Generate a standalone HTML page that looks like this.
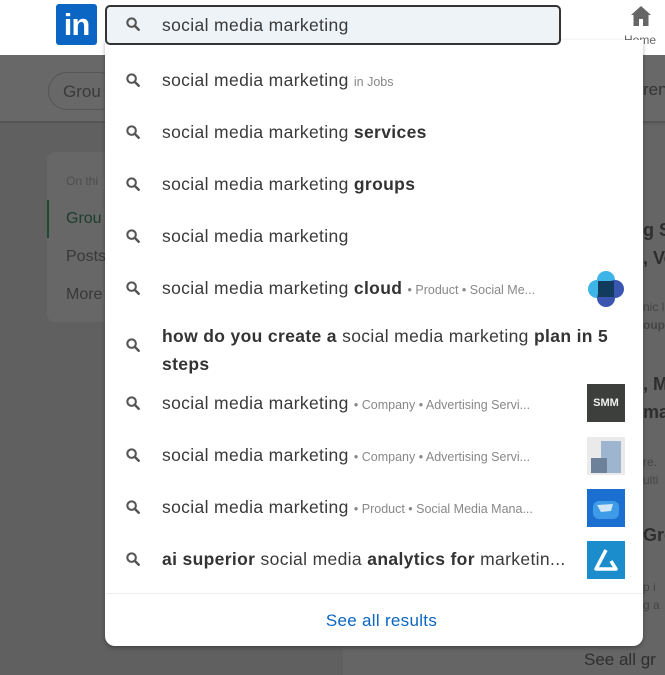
<!DOCTYPE html>
<html><head><style>
*{margin:0;padding:0;box-sizing:border-box}
body{width:665px;height:675px;overflow:hidden;position:relative;background:#606060;font-family:"Liberation Sans",sans-serif}
.a{position:absolute;white-space:nowrap}
.t{position:absolute;left:162px;font-size:17.5px;color:#3a3a3a;white-space:nowrap;letter-spacing:0.35px}
.t b{color:#333;font-weight:bold}
.s{font-size:12.5px;color:#888;letter-spacing:0}
.q{position:absolute;left:125px;width:17px;height:17px}
.lg{position:absolute;left:587px;width:38px;height:38px}
</style></head><body>
<div class="a" style="left:0;top:0;width:665px;height:55px;background:#fff"></div>
<div class="a" style="left:0;top:55px;width:665px;height:68px;background:#686868;border-bottom:2px solid #555"></div>
<div class="a" style="left:48px;top:72px;width:70px;height:38px;border:1px solid #555;border-radius:19px;color:#3a3a3a;font-size:17px;padding:9px 0 0 14px">Grou</div>
<div class="a" style="left:47px;top:152px;width:70px;height:170px;background:#676767;border-radius:8px"></div>
<div class="a" style="left:66px;top:174px;font-size:12px;color:#4e4e4e">On thi</div>
<div class="a" style="left:47px;top:200px;width:2px;height:38px;background:#1d4a33"></div>
<div class="a" style="left:66px;top:210px;font-size:16px;color:#1d3d2c">Grou</div>
<div class="a" style="left:66px;top:248px;font-size:16px;color:#383838">Posts</div>
<div class="a" style="left:66px;top:286px;font-size:16px;color:#383838">More</div>
<div class="a" style="left:343px;top:125px;width:322px;height:550px;background:#656565"></div>
<div class="a" style="left:643px;top:216px;font-size:18px;color:#2e2e2e;line-height:28px;font-weight:bold">g S<br>, Vo</div>
<div class="a" style="left:643px;top:298px;font-size:12px;color:#454545;line-height:18px">nic l<br><b>oup</b></div>
<div class="a" style="left:643px;top:370px;font-size:18px;color:#2e2e2e;line-height:28px;font-weight:bold">, M<br>ma</div>
<div class="a" style="left:643px;top:453px;font-size:12px;color:#454545;line-height:18px">re.<br>ulti</div>
<div class="a" style="left:643px;top:525px;font-size:18px;color:#2e2e2e;font-weight:bold">Gro</div>
<div class="a" style="left:643px;top:578px;font-size:12px;color:#454545;line-height:18px">p i<br>g a</div>
<div class="a" style="left:584px;top:650px;font-size:17px;color:#2e2e2e">See all gr</div>
<div class="a" style="left:643px;top:80px;font-size:17px;color:#333">ren</div>

<div class="a" style="left:56px;top:4px;width:41px;height:41px;background:#0a66c2;border-radius:3px;color:#fff;font-weight:bold;font-size:31px;line-height:42px;text-align:center;letter-spacing:-1px">in</div>
<svg class="a" style="left:628px;top:4px" width="26" height="24" viewBox="0 0 24 24"><path d="M12 2 L2 11 L4.5 11 L4.5 22 L10 22 L10 15 L14 15 L14 22 L19.5 22 L19.5 11 L22 11 Z" fill="#666"/></svg>
<div class="a" style="left:624px;top:33px;font-size:12px;color:#666">Home</div>

<div class="a" style="left:105px;top:40px;width:538px;height:606px;background:#fff;border-radius:0 0 10px 10px;box-shadow:0 2px 4px rgba(0,0,0,.3)"></div>
<div class="a" style="left:105px;top:5px;width:456px;height:40px;background:#eef3f8;border:2px solid #333;border-radius:5px"></div>
<div class="a" style="left:106px;top:593px;width:536px;height:1px;background:#eee"></div>
<div class="a" style="top:611px;text-align:center;font-size:17px;color:#0a66c2;letter-spacing:0.3px;left:0;width:763px">See all results</div>

<svg width="0" height="0" style="position:absolute"><defs><symbol id="m" viewBox="0 0 18 18"><circle cx="7" cy="7" r="4.5" fill="none" stroke="#555" stroke-width="2.2"/><path d="M10.3 10.3 L14.5 14.5" stroke="#555" stroke-width="2.6" stroke-linecap="round"/></symbol></defs></svg>

<svg class="q" style="top:16px"><use href="#m"/></svg><div class="t" style="top:15px">social media marketing</div>
<svg class="q" style="top:72px"><use href="#m"/></svg><div class="t" style="top:70px">social media marketing <span class="s">in Jobs</span></div>
<svg class="q" style="top:124px"><use href="#m"/></svg><div class="t" style="top:122px">social media marketing <b>services</b></div>
<svg class="q" style="top:176px"><use href="#m"/></svg><div class="t" style="top:174px">social media marketing <b>groups</b></div>
<svg class="q" style="top:228px"><use href="#m"/></svg><div class="t" style="top:226px">social media marketing</div>
<svg class="q" style="top:280px"><use href="#m"/></svg><div class="t" style="top:278px">social media marketing <b>cloud</b> <span class="s">• Product • Social Me...</span></div>
<svg class="q" style="top:337px"><use href="#m"/></svg><div class="t" style="top:322px;line-height:28px"><b>how do you create a</b> social media marketing <b>plan in 5</b><br><b>steps</b></div>
<svg class="q" style="top:395px"><use href="#m"/></svg><div class="t" style="top:393px">social media marketing <span class="s">• Company • Advertising Servi...</span></div>
<svg class="q" style="top:447px"><use href="#m"/></svg><div class="t" style="top:445px">social media marketing <span class="s">• Company • Advertising Servi...</span></div>
<svg class="q" style="top:499px"><use href="#m"/></svg><div class="t" style="top:497px">social media marketing <span class="s">• Product • Social Media Mana...</span></div>
<svg class="q" style="top:551px"><use href="#m"/></svg><div class="t" style="top:549px"><b>ai superior</b> social media <b>analytics for</b> marketin...</div>

<svg class="lg" style="top:270px" viewBox="0 0 38 38"><circle cx="10" cy="19" r="9" fill="#3fb4e6"/><circle cx="19" cy="10" r="9" fill="#3fb4e6"/><circle cx="28" cy="19" r="9" fill="#3a56b0"/><circle cx="19" cy="28" r="9" fill="#3a56b0"/><rect x="11" y="11" width="16" height="16" fill="#123c5e"/></svg>
<div class="lg" style="top:384px;background:#3d3f3c;color:#eee;font-weight:bold;font-size:11px;line-height:38px;text-align:center">SMM</div>
<svg class="lg" style="top:437px" viewBox="0 0 38 38"><rect width="38" height="38" fill="#ebeaea"/><rect x="14" y="4" width="20" height="32" fill="#9db5cf"/><rect x="4" y="21" width="16" height="15" fill="#6d819a"/></svg>
<svg class="lg" style="top:489px" viewBox="0 0 38 38"><rect width="38" height="38" fill="#1a6fd0"/><rect x="6" y="12" width="26" height="18" rx="6" fill="#3d9be8"/><path d="M10 16 L26 15 L24 22 L14 23Z" fill="#cfe6f7"/></svg>
<svg class="lg" style="top:541px" viewBox="0 0 38 38"><rect width="38" height="38" fill="#1b8ccc"/><path d="M19 9 L9 28 L29 28 L24 20" fill="none" stroke="#fff" stroke-width="3.5" stroke-linejoin="round"/></svg>
</body></html>
